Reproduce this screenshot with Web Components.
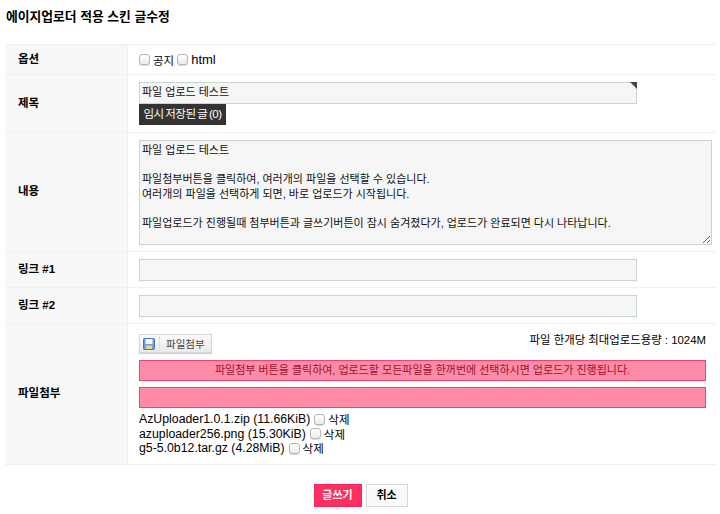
<!DOCTYPE html>
<html lang="ko">
<head>
<meta charset="utf-8">
<title>에이지업로더 적용 스킨 글수정</title>
<style>
html, body { margin: 0; background: #fff; }
body { font: 12px "Liberation Sans", "Noto Sans CJK KR", sans-serif; color: #000; }
</style>
</head>
<body>
<write-form>
  <span slot="title">에이지업로더 적용 스킨 글수정</span>

  <form-row label="옵션" h="30">
    <check-label>공지</check-label> <check-label latin>html</check-label>
  </form-row>

  <form-row label="제목" h="58">
    <text-box corner>파일 업로드 테스트</text-box>
    <dark-tag>임시 저장된 글 (0)</dark-tag>
  </form-row>

  <form-row label="내용" h="119">
    <memo-box>파일 업로드 테스트

파일첨부버튼을 클릭하여, 여러개의 파일을 선택할 수 있습니다.
여러개의 파일을 선택하게 되면, 바로 업로드가 시작됩니다.

파일업로드가 진행될때 첨부버튼과 글쓰기버튼이 잠시 숨겨졌다가, 업로드가 완료되면 다시 나타납니다.</memo-box>
  </form-row>

  <form-row label="링크 #1" h="36"><text-box></text-box></form-row>
  <form-row label="링크 #2" h="36"><text-box></text-box></form-row>

  <form-row label="파일첨부" h="141">
    <file-panel></file-panel>
  </form-row>

  <form-buttons></form-buttons>
</write-form>

<script>
const formTpl = document.createElement('template');
formTpl.innerHTML = `
  <style>
    :host { display: block; }
    h1 { margin: 0; height: 44px; box-sizing: border-box; padding: 9px 0 0 6px; font-size: 12.8px; line-height: 16px; font-weight: bold; }
    .rows { margin: 0 4px 0 5px; border-top: 1px solid #f0f0f0; }
  </style>
  <h1><slot name="title"></slot></h1>
  <div class="rows"><slot></slot></div>
`;
class WriteForm extends HTMLElement {
  constructor() {
    super();
    this.attachShadow({ mode: 'open' }).appendChild(formTpl.content.cloneNode(true));
  }
}
customElements.define('write-form', WriteForm);

const rowTpl = document.createElement('template');
rowTpl.innerHTML = `
  <style>
    :host { display: grid; grid-template-columns: 123px 1fr; box-sizing: border-box; border-bottom: 1px solid #f0f0f0; }
    .label { display: flex; align-items: center; padding: 0 0 4px 13px; background: #f8f8f8; border-right: 1px solid #efefef; font-weight: bold; font-size: 11.500px; }
    .field { display: flex; flex-direction: column; justify-content: center; align-items: flex-start; padding: 0 4px 0 11px; min-width: 0; }
    .field.inline { flex-direction: row; justify-content: flex-start; align-items: center; }
    .field.top { justify-content: flex-start; }
  </style>
  <div class="label"></div>
  <div class="field"><slot></slot></div>
`;
class FormRow extends HTMLElement {
  constructor() {
    super();
    this.attachShadow({ mode: 'open' }).appendChild(rowTpl.content.cloneNode(true));
  }
  connectedCallback() {
    this.shadowRoot.querySelector('.label').textContent = this.getAttribute('label');
    this.style.height = this.getAttribute('h') + 'px';
    const field = this.shadowRoot.querySelector('.field');
    if (this.querySelector('check-label')) field.classList.add('inline');
    if (this.querySelector('file-panel')) field.classList.add('top');
  }
}
customElements.define('form-row', FormRow);

const checkCss = `
  .box { appearance: none; -webkit-appearance: none; width: 11px; height: 11px; margin: 0; box-sizing: border-box;
    border: 1px solid #b4b4b4; border-radius: 3px; background: linear-gradient(#fff, #ececec); box-shadow: 0 1px 1px rgba(0,0,0,.15); flex: none; }
`;

const checkTpl = document.createElement('template');
checkTpl.innerHTML = `
  <style>
    :host { display: inline-flex; align-items: center; gap: 3px; margin-right: 3px; font-size: 11.500px; }
    :host([latin]) { font-size: 13px; }
    ${checkCss}
  </style>
  <input class="box" type="checkbox"><span><slot></slot></span>
`;
class CheckLabel extends HTMLElement {
  constructor() {
    super();
    this.attachShadow({ mode: 'open' }).appendChild(checkTpl.content.cloneNode(true));
  }
}
customElements.define('check-label', CheckLabel);

const boxTpl = document.createElement('template');
boxTpl.innerHTML = `
  <style>
    :host { display: block; position: relative; box-sizing: border-box; width: 498px; height: 22px; padding: 0 2px; line-height: 19px;
      border: 1px solid #c9d6d0; background: #f6f6f6; font-size: 11px; color: #111; }
    .corner { display: none; position: absolute; top: -1px; right: -1px; width: 0; height: 0; border-top: 7px solid #444; border-left: 7px solid transparent; }
    :host([corner]) .corner { display: block; }
  </style>
  <slot></slot><i class="corner"></i>
`;
class TextBox extends HTMLElement {
  constructor() {
    super();
    this.attachShadow({ mode: 'open' }).appendChild(boxTpl.content.cloneNode(true));
  }
}
customElements.define('text-box', TextBox);

const tagTpl = document.createElement('template');
tagTpl.innerHTML = `
  <style>
    :host { display: block; box-sizing: border-box; height: 21px; width: 87px; line-height: 20px; text-align: center; background: #333; color: #fff; font-size: 11.500px; letter-spacing: -.5px; word-spacing: -1px; white-space: nowrap; }
  </style>
  <slot></slot>
`;
class DarkTag extends HTMLElement {
  constructor() {
    super();
    this.attachShadow({ mode: 'open' }).appendChild(tagTpl.content.cloneNode(true));
  }
}
customElements.define('dark-tag', DarkTag);

const memoTpl = document.createElement('template');
memoTpl.innerHTML = `
  <style>
    :host { display: block; width: 100%; }
    textarea { display: block; box-sizing: border-box; width: 100%; height: 105px; margin: 0; padding: 2px 2px; outline: 0; border: 1px solid #c9d6d0; background: #f6f6f6; font: 11px/14.8px "Liberation Sans", "Noto Sans CJK KR", sans-serif; color: #111; }
  </style>
  <textarea spellcheck="false"></textarea>
`;
class MemoBox extends HTMLElement {
  constructor() {
    super();
    this.attachShadow({ mode: 'open' }).appendChild(memoTpl.content.cloneNode(true));
  }
  connectedCallback() {
    this.shadowRoot.querySelector('textarea').textContent = this.textContent;
  }
}
customElements.define('memo-box', MemoBox);

const files = [
  ['AzUploader1.0.1.zip (11.66KiB)'],
  ['azuploader256.png (15.30KiB)'],
  ['g5-5.0b12.tar.gz (4.28MiB)']
];

const panelTpl = document.createElement('template');
panelTpl.innerHTML = `
  <style>
    :host { display: block; width: 567px; padding-top: 10px; font-size: 12.300px; }
    ${checkCss}
    .top { display: flex; justify-content: space-between; align-items: flex-start; height: 26px; }
    .btn { display: flex; align-items: center; box-sizing: border-box; width: 73px; height: 19px; background: linear-gradient(#fbfbfb, #e9e9e9); border: 1px solid #d8d8d8; box-shadow: 0 1px 1px rgba(0,0,0,.18); font-size: 10.500px; color: #444; }
    .btn svg { margin-left: 3px; flex: none; }
    .btn b { width: 1px; height: 15px; margin: 0 6px 0 4px; background: #ddd; }
    .btn span { white-space: nowrap; }
    .max { font-size: 11.400px; line-height: 14px; margin-top: -1px; }
    .bar { box-sizing: border-box; height: 21px; margin-bottom: 6px; border: 1px solid #f0436d; background: #ff8ba6; text-align: center; line-height: 19px; font-size: 11px; color: #9a1030; }
    .list { margin-top: -2px; }
    .file { display: flex; align-items: center; gap: 4px; height: 14.5px; white-space: nowrap; }
    .file span:last-child { font-size: 11.500px; margin-left: -1px; }
  </style>
  <div class="top">
    <div class="btn">
      <svg width="12" height="12" viewBox="0 0 12 12">
        <rect x=".5" y=".5" width="11" height="11" rx="1" fill="#6f9be0" stroke="#4b76b8"/>
        <rect x="2.500" y="1" width="7" height="5" fill="#f4f7fb"/>
        <rect x="3" y="7.500" width="6" height="3.500" fill="#e8d88a"/>
      </svg>
      <b></b><span>파일첨부</span>
    </div>
    <div class="max">파일 한개당 최대업로드용량 : 1024M</div>
  </div>
  <div class="bar">파일첨부 버튼을 클릭하여, 업로드할 모든파일을 한꺼번에 선택하시면 업로드가 진행됩니다.</div>
  <div class="bar"></div>
  <div class="list"></div>
`;
class FilePanel extends HTMLElement {
  constructor() {
    super();
    const root = this.attachShadow({ mode: 'open' });
    root.appendChild(panelTpl.content.cloneNode(true));
    const list = root.querySelector('.list');
    files.forEach(f => {
      const row = document.createElement('div');
      row.className = 'file';
      row.innerHTML = `<span>${f[0]}</span><input class="box" type="checkbox"><span>삭제</span>`;
      list.appendChild(row);
    });
  }
}
customElements.define('file-panel', FilePanel);

const btnTpl = document.createElement('template');
btnTpl.innerHTML = `
  <style>
    :host { display: flex; justify-content: center; gap: 4px; padding: 19px 0 0; }
    div { box-sizing: border-box; height: 23px; line-height: 21px; text-align: center; font-size: 11px; }
    .ok { width: 48px; background: #ff3061; border: 1px solid #f0285a; color: #fff; font-weight: bold; }
    .no { width: 42px; background: #fafafa; border: 1px solid #d8d8d8; color: #000; font-weight: bold; }
  </style>
  <div class="ok">글쓰기</div><div class="no">취소</div>
`;
class FormButtons extends HTMLElement {
  constructor() {
    super();
    this.attachShadow({ mode: 'open' }).appendChild(btnTpl.content.cloneNode(true));
  }
}
customElements.define('form-buttons', FormButtons);
</script>
</body>
</html>
